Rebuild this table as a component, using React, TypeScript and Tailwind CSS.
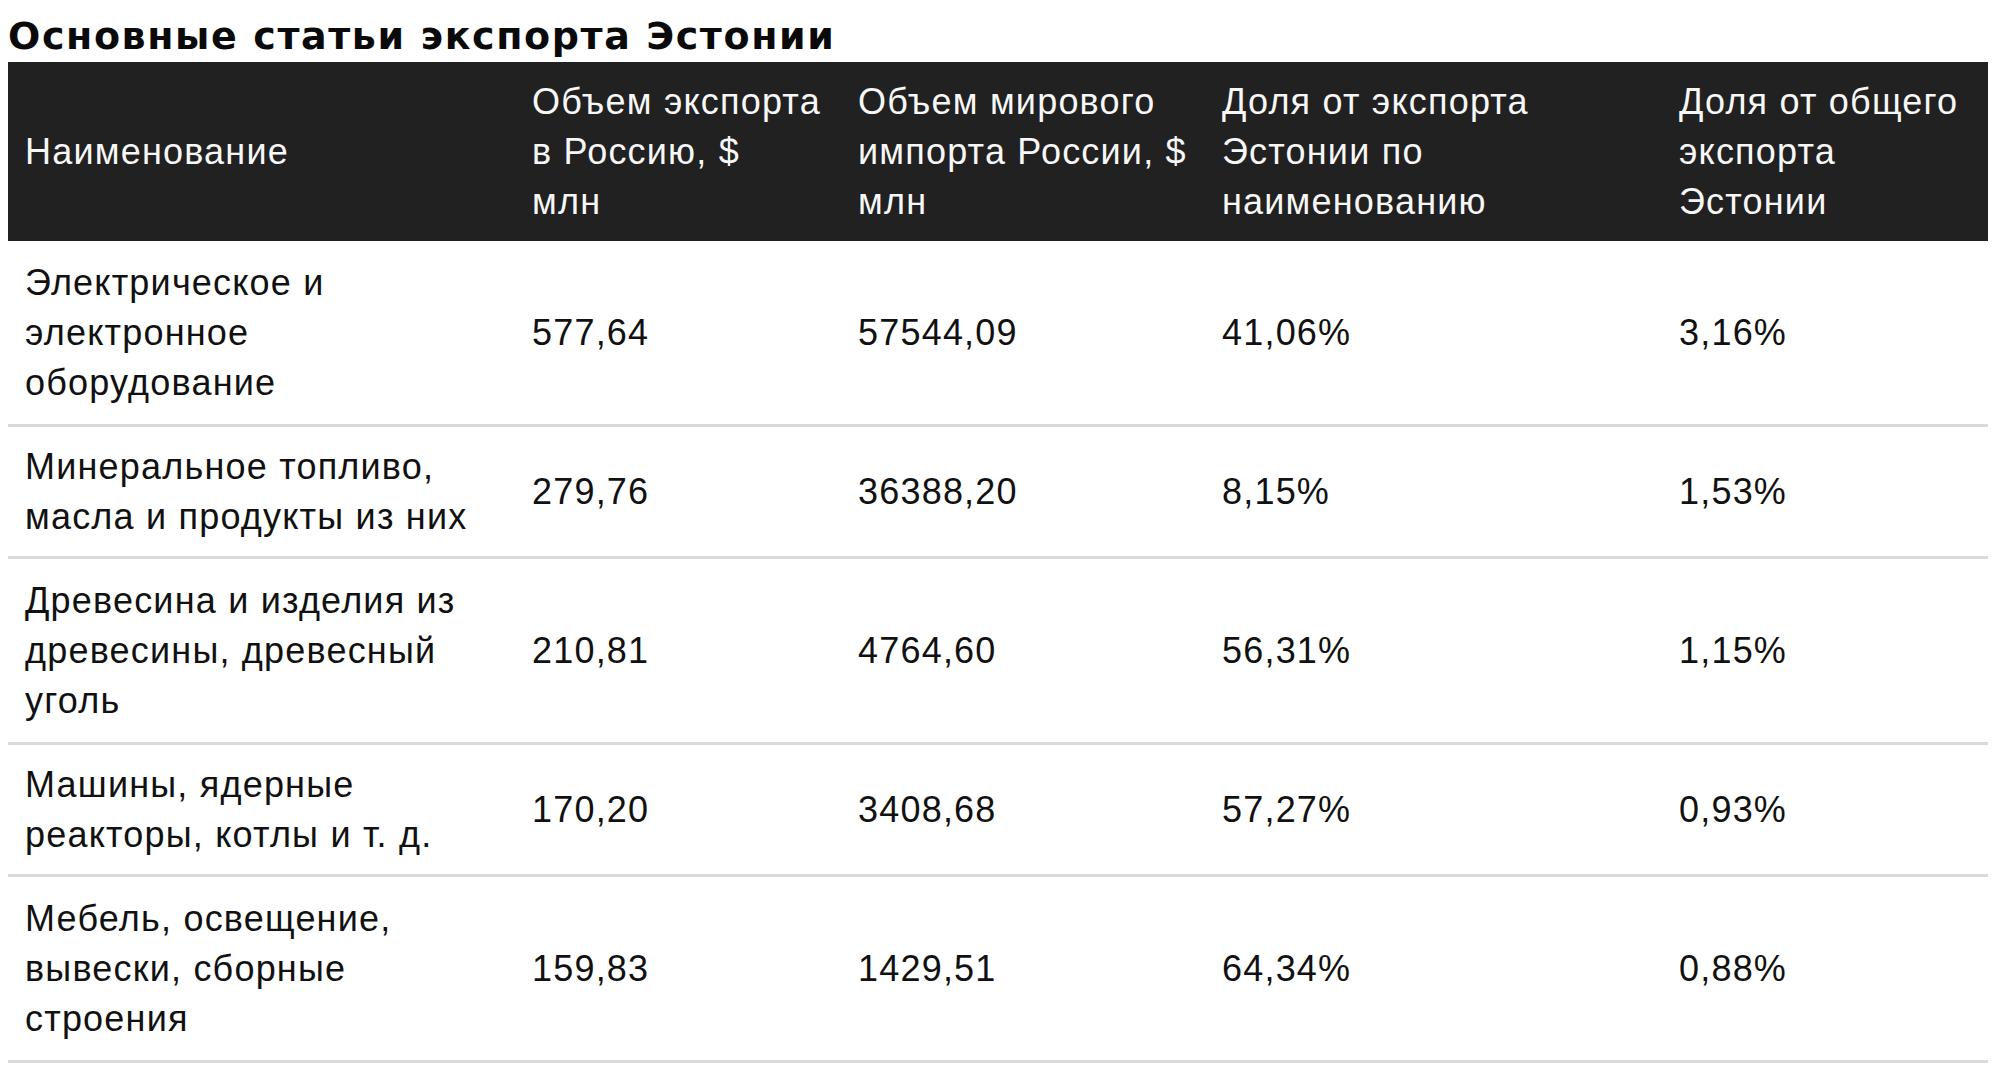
import React from 'react';

interface ExportRow {
    name: React.ReactNode;
    lines: 2 | 3;
    toRussia: string;
    worldImport: string;
    shareByItem: string;
    shareTotal: string;
}

const rows: ExportRow[] = [
    { name: <>Электрическое и<br />электронное<br />оборудование</>, lines: 3, toRussia: '577,64', worldImport: '57544,09', shareByItem: '41,06%', shareTotal: '3,16%' },
    { name: <>Минеральное топливо,<br />масла и продукты из них</>, lines: 2, toRussia: '279,76', worldImport: '36388,20', shareByItem: '8,15%', shareTotal: '1,53%' },
    { name: <>Древесина и изделия из<br />древесины, древесный<br />уголь</>, lines: 3, toRussia: '210,81', worldImport: '4764,60', shareByItem: '56,31%', shareTotal: '1,15%' },
    { name: <>Машины, ядерные<br />реакторы, котлы и т. д.</>, lines: 2, toRussia: '170,20', worldImport: '3408,68', shareByItem: '57,27%', shareTotal: '0,93%' },
    { name: <>Мебель, освещение,<br />вывески, сборные<br />строения</>, lines: 3, toRussia: '159,83', worldImport: '1429,51', shareByItem: '64,34%', shareTotal: '0,88%' },
];

const App: React.FC = () => {
    return (
        <div className="min-h-screen bg-white pl-[8px] pr-[12px] font-[family-name:'Liberation_Sans',Arial,sans-serif] text-[#111]">
            <h1 className="pt-[10px] font-[family-name:'DejaVu_Sans',Verdana,sans-serif] text-[38px] leading-[52px] font-bold tracking-[1.6px] text-[#0a0a0a] whitespace-nowrap">
                Основные статьи экспорта Эстонии
            </h1>
            <table className="w-[1980px] table-fixed border-collapse text-[36px] leading-[50px] tracking-[1.2px]">
                <colgroup>
                    <col className="w-[507px]" />
                    <col className="w-[326px]" />
                    <col className="w-[364px]" />
                    <col className="w-[457px]" />
                    <col className="w-[326px]" />
                </colgroup>
                <thead>
                    <tr className="bg-[#212121] text-[#f7f7f7]">
                        <th className="h-[179px] px-[17px] py-[12px] text-left font-normal align-middle whitespace-nowrap">Наименование</th>
                        <th className="px-[17px] py-[12px] text-left font-normal align-middle whitespace-nowrap">Объем экспорта<br />в Россию, $<br />млн</th>
                        <th className="px-[17px] py-[12px] text-left font-normal align-middle whitespace-nowrap">Объем мирового<br />импорта России, $<br />млн</th>
                        <th className="px-[17px] py-[12px] text-left font-normal align-middle whitespace-nowrap">Доля от экспорта<br />Эстонии по<br />наименованию</th>
                        <th className="px-[17px] py-[12px] text-left font-normal align-middle whitespace-nowrap">Доля от общего<br />экспорта<br />Эстонии</th>
                    </tr>
                </thead>
                <tbody>
                    {rows.map((row, i) => {
                        const pad = row.lines === 3 ? 'pt-[17px] pb-[16px]' : 'pt-[15px] pb-[14px]';
                        return (
                            <tr key={i} className="border-b-[3px] border-[#dadada]">
                                <td className={`pl-[17px] pr-[10px] ${pad} align-middle whitespace-nowrap`}>{row.name}</td>
                                <td className={`px-[17px] ${pad} align-middle`}>{row.toRussia}</td>
                                <td className={`px-[17px] ${pad} align-middle`}>{row.worldImport}</td>
                                <td className={`px-[17px] ${pad} align-middle`}>{row.shareByItem}</td>
                                <td className={`px-[17px] ${pad} align-middle`}>{row.shareTotal}</td>
                            </tr>
                        );
                    })}
                </tbody>
            </table>
        </div>
    );
};

export default App;
